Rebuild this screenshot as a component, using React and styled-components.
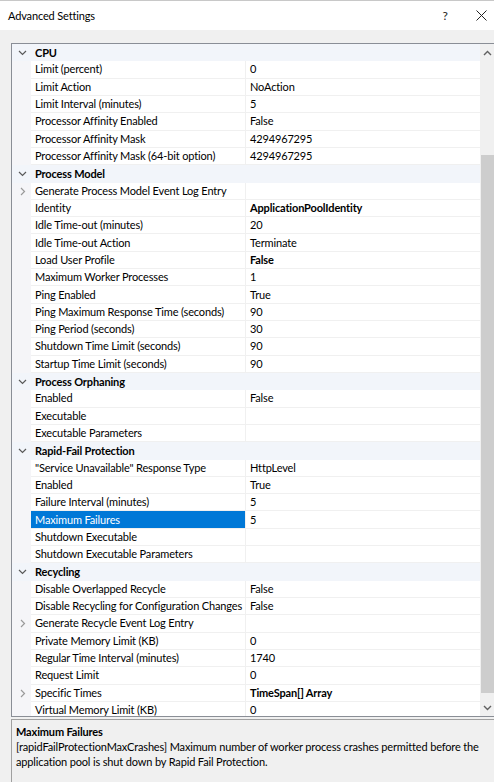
import React from "react";
import styled, { createGlobalStyle } from "styled-components";

const GlobalStyle = createGlobalStyle`
  html, body {
    margin: 0;
    padding: 0;
    background: #f0f0f0;
  }
  body {
    font-family: Lato, "Liberation Sans", sans-serif;
    font-size: 11px;
    letter-spacing: -0.15px;
    color: #000;
  }
`;

const ROW_H = 17.32;

const Window = styled.div`
  width: 494px;
  height: 782px;
  overflow: hidden;
  display: flex;
  flex-direction: column;
  background: #f0f0f0;
  border-top: 1px solid #c8c8c8;
  box-sizing: border-box;
`;

const TitleBar = styled.div`
  height: 29px;
  flex-shrink: 0;
  background: #fff;
  display: flex;
  align-items: center;
  gap: 10px;
  padding-left: 8px;
`;

const Title = styled.div`
  flex: 1;
`;

const TitleButton = styled.div`
  width: 26px;
  display: flex;
  justify-content: center;
  font-size: 12px;
  color: #222;
`;

const Body = styled.div`
  flex: 1;
  display: flex;
  flex-direction: column;
  padding: 13px 0 0 11px;
  min-height: 0;
`;

const Grid = styled.div`
  height: 674px;
  flex-shrink: 0;
  display: flex;
  border: 1px solid #8a8e96;
  border-right: none;
  background: #fff;
  box-sizing: border-box;
  overflow: hidden;
`;

const Rows = styled.div`
  flex: 1;
  overflow: hidden;
`;

const Row = styled.div`
  display: grid;
  grid-template-columns: 19px 215px 1fr;
  height: ${ROW_H}px;
  box-sizing: border-box;
  background: ${p => (p.category ? "#f2f5fa" : "#fff")};
`;

const Gutter = styled.div`
  background: ${p => (p.category ? "#f2f5fa" : "#f5f5f8")};
  display: flex;
  align-items: center;
  justify-content: center;
  padding-left: 2px;
`;

const Cell = styled.div`
  display: flex;
  align-items: center;
  padding: 0 0 1px 4px;
  white-space: nowrap;
  overflow: hidden;
  border-bottom: 1px solid #f0f0f0;
  box-sizing: border-box;
  font-weight: ${p => (p.bold ? 700 : 400)};
  background: ${p => (p.selected ? "#0078d7" : "transparent")};
  color: ${p => (p.selected ? "#fff" : "#000")};
`;

const NameCell = styled(Cell)`
  border-right: 1px solid #f0f0f0;
`;

const CategoryName = styled.div`
  grid-column: 2 / 4;
  display: flex;
  align-items: center;
  padding: 0 0 1px 4px;
  font-weight: 700;
`;

const Scrollbar = styled.div`
  width: 14px;
  flex-shrink: 0;
  background: #f0f0f0;
  display: flex;
  flex-direction: column;
  align-items: center;
`;

const ScrollArrow = styled.div`
  height: 17px;
  width: 100%;
  display: flex;
  align-items: center;
  justify-content: center;
`;

const Track = styled.div`
  flex: 1;
  width: 100%;
  position: relative;
`;

const Thumb = styled.div`
  position: absolute;
  left: 1px;
  right: 0;
  top: 94px;
  bottom: 6px;
  background: #cdcdcd;
`;

const Description = styled.div`
  flex: 1;
  margin-top: 2px;
  border: 1px solid #a0a0a0;
  border-right: none;
  border-bottom: none;
  padding: 4px 4px 3px;
  line-height: 15px;
`;

const DescTitle = styled.div`
  font-weight: 700;
`;

const DescText = styled.div``;

const ChevronDown = () => (
  <svg width="9" height="6" viewBox="0 0 9 6">
    <polyline points="1,1 4.5,4.5 8,1" fill="none" stroke="#5a5a5a" strokeWidth="1.2" />
  </svg>
);

const ChevronRight = () => (
  <svg width="6" height="9" viewBox="0 0 6 9">
    <polyline points="1,1 4.5,4.5 1,8" fill="none" stroke="#9a9a9a" strokeWidth="1.2" />
  </svg>
);

const ChevronUpSmall = () => (
  <svg width="9" height="6" viewBox="0 0 9 6">
    <polyline points="1,5 4.5,1.5 8,5" fill="none" stroke="#606060" strokeWidth="1.4" />
  </svg>
);

const ChevronDownSmall = () => (
  <svg width="9" height="6" viewBox="0 0 9 6">
    <polyline points="1,1 4.5,4.5 8,1" fill="none" stroke="#606060" strokeWidth="1.4" />
  </svg>
);

const CloseIcon = () => (
  <svg width="11" height="11" viewBox="0 0 11 11">
    <path d="M0.5 0.5 L10.5 10.5 M10.5 0.5 L0.5 10.5" stroke="#222" strokeWidth="1" fill="none" />
  </svg>
);

const data = [
  { cat: "CPU" },
  { name: "Limit (percent)", value: "0" },
  { name: "Limit Action", value: "NoAction" },
  { name: "Limit Interval (minutes)", value: "5" },
  { name: "Processor Affinity Enabled", value: "False" },
  { name: "Processor Affinity Mask", value: "4294967295" },
  { name: "Processor Affinity Mask (64-bit option)", value: "4294967295" },
  { cat: "Process Model" },
  { name: "Generate Process Model Event Log Entry", value: "", expand: true },
  { name: "Identity", value: "ApplicationPoolIdentity", bold: true },
  { name: "Idle Time-out (minutes)", value: "20" },
  { name: "Idle Time-out Action", value: "Terminate" },
  { name: "Load User Profile", value: "False", bold: true },
  { name: "Maximum Worker Processes", value: "1" },
  { name: "Ping Enabled", value: "True" },
  { name: "Ping Maximum Response Time (seconds)", value: "90" },
  { name: "Ping Period (seconds)", value: "30" },
  { name: "Shutdown Time Limit (seconds)", value: "90" },
  { name: "Startup Time Limit (seconds)", value: "90" },
  { cat: "Process Orphaning" },
  { name: "Enabled", value: "False" },
  { name: "Executable", value: "" },
  { name: "Executable Parameters", value: "" },
  { cat: "Rapid-Fail Protection" },
  { name: "\"Service Unavailable\" Response Type", value: "HttpLevel" },
  { name: "Enabled", value: "True" },
  { name: "Failure Interval (minutes)", value: "5" },
  { name: "Maximum Failures", value: "5", selected: true },
  { name: "Shutdown Executable", value: "" },
  { name: "Shutdown Executable Parameters", value: "" },
  { cat: "Recycling" },
  { name: "Disable Overlapped Recycle", value: "False" },
  { name: "Disable Recycling for Configuration Changes", value: "False" },
  { name: "Generate Recycle Event Log Entry", value: "", expand: true },
  { name: "Private Memory Limit (KB)", value: "0" },
  { name: "Regular Time Interval (minutes)", value: "1740" },
  { name: "Request Limit", value: "0" },
  { name: "Specific Times", value: "TimeSpan[] Array", bold: true, expand: true },
  { name: "Virtual Memory Limit (KB)", value: "0" }
];

export default function App() {
  return (
    <>
      <GlobalStyle />
      <Window>
        <TitleBar>
          <Title>Advanced Settings</Title>
          <TitleButton>?</TitleButton>
          <TitleButton>
            <CloseIcon />
          </TitleButton>
        </TitleBar>
        <Body>
          <Grid>
            <Rows>
              {data.map((r, i) =>
                r.cat ? (
                  <Row key={i} category>
                    <Gutter category>
                      <ChevronDown />
                    </Gutter>
                    <CategoryName>{r.cat}</CategoryName>
                  </Row>
                ) : (
                  <Row key={i}>
                    <Gutter>{r.expand && <ChevronRight />}</Gutter>
                    <NameCell selected={r.selected}>{r.name}</NameCell>
                    <Cell bold={r.bold}>{r.value}</Cell>
                  </Row>
                )
              )}
            </Rows>
            <Scrollbar>
              <ScrollArrow>
                <ChevronUpSmall />
              </ScrollArrow>
              <Track>
                <Thumb />
              </Track>
              <ScrollArrow>
                <ChevronDownSmall />
              </ScrollArrow>
            </Scrollbar>
          </Grid>
          <Description>
            <DescTitle>Maximum Failures</DescTitle>
            <DescText>
              [rapidFailProtectionMaxCrashes] Maximum number of worker process crashes permitted before the
              application pool is shut down by Rapid Fail Protection.
            </DescText>
          </Description>
        </Body>
      </Window>
    </>
  );
}
